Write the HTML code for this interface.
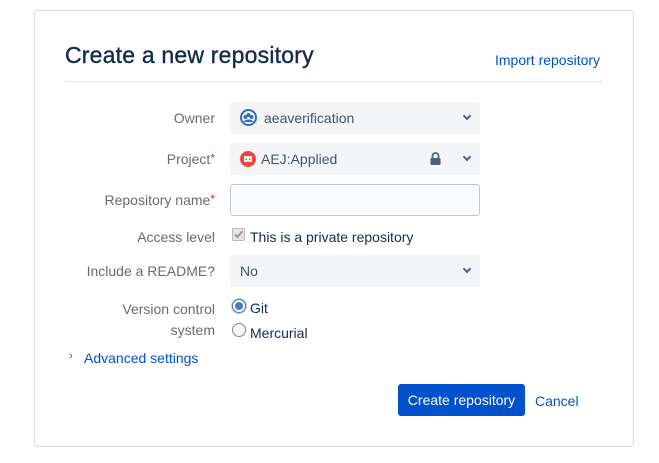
<!DOCTYPE html>
<html><head><style>
body{margin:0;width:659px;height:463px;background:#fff;font-family:"Liberation Sans",sans-serif;position:relative;overflow:hidden}
.card{position:absolute;left:34px;top:10px;width:600px;height:437px;border:1px solid #dcdcdc;border-radius:4px;box-sizing:border-box}
.a{position:absolute;white-space:nowrap}
h1{position:absolute;left:65px;top:42px;margin:0;font-size:23px;font-weight:normal;color:#172b4d;-webkit-text-stroke:.4px #172b4d;letter-spacing:.2px}
.hr{position:absolute;left:65px;top:81px;width:538px;height:1px;background:#dfe1e6}
.lbl{position:absolute;right:444px;font-size:14px;color:#6b6b6b;text-align:right}
.sel{position:absolute;left:230px;width:250px;height:32px;background:#f4f5f7;border-radius:3px;font-size:14px;color:#42526e}
.chev{position:absolute;right:10px;top:11px;width:4px;height:4px;border-right:2px solid #505f79;border-bottom:2px solid #505f79;transform:rotate(45deg)}
.star{color:#de350b;font-size:12px;vertical-align:top}
.link{color:#0052cc;font-size:14px}
</style></head><body>
<div class="card"></div>
<h1>Create a new repository</h1>
<div class="a link" style="left:495px;top:52px">Import repository</div>
<div class="hr"></div>

<div class="lbl" style="top:110px">Owner</div>
<div class="sel" style="top:102px">
 <svg class="a" style="left:10px;top:7px" width="17" height="17" viewBox="0 0 17 17"><circle cx="8.5" cy="8.5" r="7.5" fill="none" stroke="#2f6ebd" stroke-width="2"/><circle cx="5.5" cy="8" r="2" fill="#2f6ebd"/><circle cx="8.5" cy="6" r="2" fill="#2f6ebd"/><circle cx="11.5" cy="8" r="2" fill="#2f6ebd"/><path d="M3 13q5.5-5 11 0" fill="#2f6ebd"/></svg>
 <span class="a" style="left:34px;top:8px">aeaverification</span><div class="chev"></div></div>

<div class="lbl" style="top:151px">Project<span class="star">*</span></div>
<div class="sel" style="top:143px">
 <svg class="a" style="left:10px;top:8px" width="16" height="16" viewBox="0 0 16 16"><circle cx="8" cy="8" r="8" fill="#f0473c"/><rect x="4" y="5" width="8" height="6" rx="1" fill="#fff"/><rect x="5.5" y="7.5" width="1.5" height="1.5" fill="#f0473c"/><rect x="9" y="7.5" width="1.5" height="1.5" fill="#f0473c"/></svg>
 <span class="a" style="left:31px;top:8px">AEJ:Applied</span>
 <svg class="a" style="left:200px;top:9px" width="11" height="13" viewBox="0 0 11 13"><path d="M2.5 6V4a3 3 0 0 1 6 0v2" fill="none" stroke="#505f79" stroke-width="1.8"/><rect x="0.5" y="6" width="10" height="7" rx="1" fill="#505f79"/></svg>
 <div class="chev"></div></div>

<div class="lbl" style="top:192px">Repository name<span class="star">*</span></div>
<div class="a" style="left:230px;top:184px;width:250px;height:32px;box-sizing:border-box;border:1px solid #c1c7d0;border-radius:3px;background:#fafbfc"></div>

<div class="lbl" style="top:229px">Access level</div>
<div class="a" style="left:232px;top:228px;width:13px;height:13px;border:1px solid #bbb;border-radius:2px;background:#e6e6e6;box-sizing:border-box"><svg width="11" height="11" viewBox="0 0 11 11" style="position:absolute;left:0;top:0"><path d="M2 5.5l2.5 2.5 5-6" fill="none" stroke="#999" stroke-width="2"/></svg></div>
<div class="a" style="left:250px;top:229px;font-size:14px;color:#172b4d">This is a private repository</div>

<div class="lbl" style="top:263px">Include a README?</div>
<div class="sel" style="top:255px"><span class="a" style="left:10px;top:8px">No</span><div class="chev"></div></div>

<div class="lbl" style="top:299px;line-height:21px">Version control<br>system</div>
<div class="a" style="left:232px;top:299px;width:14px;height:14px;border-radius:50%;background:#fff;border:1px solid #4a7bb7;box-sizing:border-box;box-shadow:0 0 0 1px #b8cde8"><div style="position:absolute;left:2px;top:2px;width:8px;height:8px;border-radius:50%;background:#4a7bb7"></div></div>
<div class="a" style="left:250px;top:300px;font-size:14px;color:#172b4d">Git</div>
<div class="a" style="left:232px;top:323px;width:14px;height:14px;border-radius:50%;border:1px solid #888;box-sizing:border-box;background:#f8f8f8"></div>
<div class="a" style="left:250px;top:325px;font-size:14px;color:#172b4d">Mercurial</div>

<div class="a" style="left:69px;top:350px;font-size:11px;color:#555">›</div>
<div class="a link" style="left:84px;top:350px">Advanced settings</div>

<div class="a" style="left:398px;top:384px;width:127px;height:32px;background:#0052cc;border-radius:3px;color:#fff;font-size:14px;line-height:32px;text-align:center">Create repository</div>
<div class="a link" style="left:535px;top:393px">Cancel</div>
</body></html>
